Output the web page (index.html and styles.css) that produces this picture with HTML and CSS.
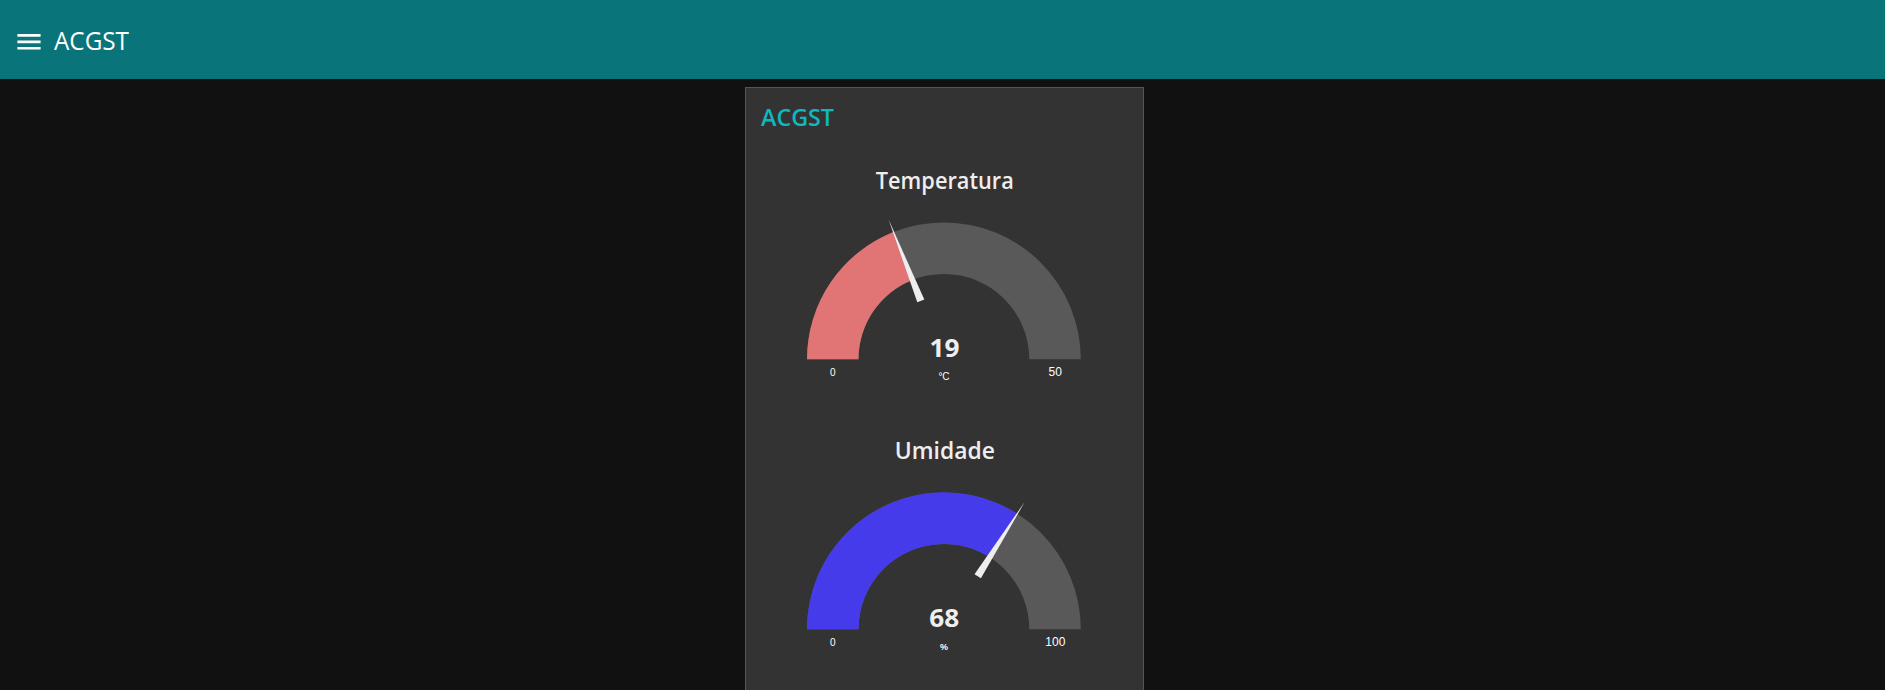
FILE: index.html
```html
<!DOCTYPE html>
<html lang="pt-BR">
<head>
<meta charset="utf-8">
<title>ACGST</title>
<link rel="stylesheet" href="styles.css">
</head>
<body>
<header class="toolbar">
  <svg class="menu-icon" viewBox="0 0 24 18" width="24" height="18"><path d="M.4 1.1h23.2v2.6H.4zM.4 7.6h23.2v2.6H.4zM.4 13.9h23.2v2.6H.4z"/></svg>
  <h1 class="toolbar-title"><svg width="80" height="36"><text x="0" y="26" textLength="75" lengthAdjust="spacingAndGlyphs">ACGST</text></svg></h1>
</header>
<main class="page">
  <section class="card">
    <h2 class="card-title"><svg width="80" height="36"><text x="0" y="26" textLength="73" lengthAdjust="spacingAndGlyphs">ACGST</text></svg></h2>
    <svg class="gauge" viewBox="0 0 397 270" width="397" height="270">
      <text class="label" x="198.8" y="39" textLength="138" lengthAdjust="spacingAndGlyphs">Temperatura</text>
      <path class="track" d="M61 209.3A136.9 136.9 0 0 1 334.8 209.3H283.3A85.4 85.4 0 0 0 112.5 209.3Z"/>
      <path class="warm" d="M61 209.3A136.9 136.9 0 0 1 147.5 82L166.5 129.9A85.4 85.4 0 0 0 112.5 209.3Z"/>
      <path class="needle" d="M142.6 69.6L171.3 152.3L178.3 149.5Z"/>
      <text class="value" x="198.5" y="207" textLength="30" lengthAdjust="spacingAndGlyphs">19</text>
      <text class="unit" x="198" y="230">°C</text>
      <text class="min" x="86.7" y="226">0</text>
      <text class="max" x="309.3" y="226">50</text>
    </svg>
    <svg class="gauge" viewBox="0 0 397 270" width="397" height="270">
      <text class="label" x="198.8" y="39" textLength="100" lengthAdjust="spacingAndGlyphs">Umidade</text>
      <path class="track" d="M61 209.3A136.9 136.9 0 0 1 334.8 209.3H283.3A85.4 85.4 0 0 0 112.5 209.3Z"/>
      <path class="humid" d="M61 209.3A136.9 136.9 0 0 1 271.3 93.7L243.7 137.2A85.4 85.4 0 0 0 112.5 209.3Z"/>
      <path class="needle" d="M278.8 81.8L228.5 154.3L234.9 158.3Z"/>
      <text class="value" x="198.3" y="207" textLength="30" lengthAdjust="spacingAndGlyphs">68</text>
      <text class="unit percent" x="198" y="230">%</text>
      <text class="min" x="86.7" y="226">0</text>
      <text class="max" x="309.3" y="226">100</text>
    </svg>
  </section>
</main>
</body>
</html>
```
FILE: styles.css
```css
* { box-sizing: border-box; }
body {
  margin: 0;
  background: #111;
  font-family: "Open Sans", "Noto Sans", sans-serif;
}
.toolbar {
  display: flex;
  align-items: flex-start;
  gap: 13px;
  height: 79px;
  padding: 24px 17px;
  background: #097479;
}
.menu-icon { margin-top: 9px; fill: #fff; }
.toolbar-title, .card-title { margin: 0; line-height: 0; }
.toolbar-title { font-size: 25.5px; font-weight: 400; fill: #fff; }
.page { display: flex; padding: 8px 0 0 745px; }
.card {
  width: 399px;
  height: 603px;
  background: #333;
  border: 1px solid #555;
  border-bottom: 0;
}
.card-title {
  height: 62px;
  padding: 12px 0 0 15px;
  font-size: 24px;
  font-weight: 600;
  fill: #0eb8c0;
}
.gauge { display: block; }
.gauge text { text-anchor: middle; fill: #eee; }
.label { font-size: 24px; font-weight: 600; }
.track { fill: #595959; }
.warm { fill: #e17575; }
.humid { fill: #463bea; }
.needle { fill: #eee; }
.value { font-size: 25px; font-weight: 700; }
.unit, .min { font: 10px "Liberation Sans", Arial, sans-serif; }
.percent { font-size: 9px; font-weight: 700; }
.max { font: 12px "Liberation Sans", Arial, sans-serif; }
.gauge .unit, .gauge .min, .gauge .max { fill: #fff; }
```
